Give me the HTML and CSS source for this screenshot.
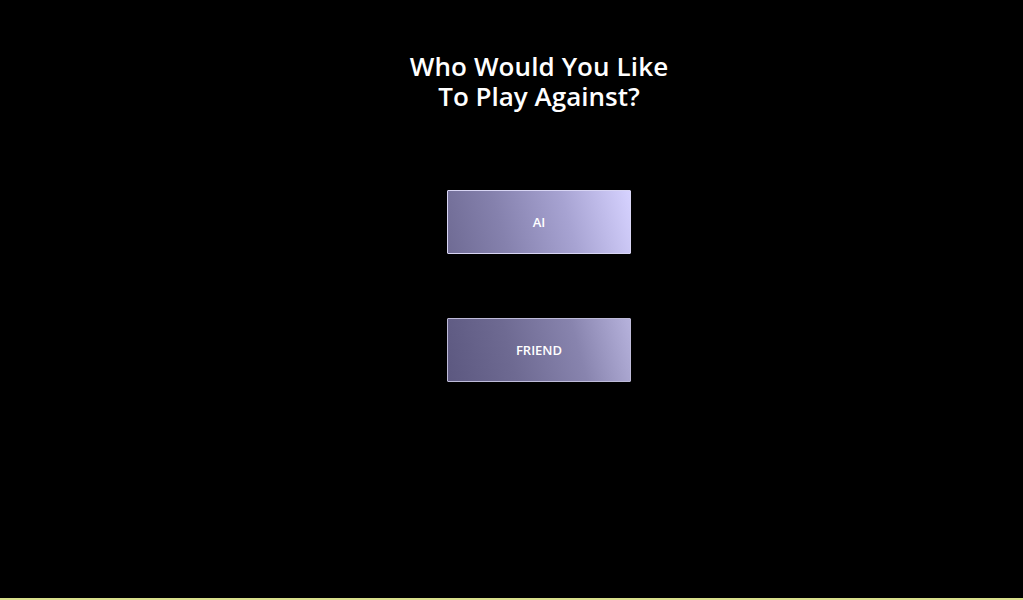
FILE: index.html
```html
<!DOCTYPE html>
<html>
<head>
<meta charset="utf-8">
<link rel="stylesheet" href="styles.css">
</head>
<body>
<main class="screen">
  <h1 class="title"><span class="line">Who Would You Like</span><span class="line">To Play Against?</span></h1>
  <div class="choices">
    <button class="btn btn-ai">AI</button>
    <button class="btn btn-friend">FRIEND</button>
  </div>
</main>
<div class="bottom-line"></div>
</body>
</html>
```
FILE: styles.css
```css
html, body {
  margin: 0;
  padding: 0;
  background: #000;
}
body {
  width: 1023px;
  height: 600px;
  display: flex;
  flex-direction: column;
  overflow: hidden;
}
.screen {
  flex: 1;
  display: flex;
  flex-direction: column;
  align-items: center;
  padding-left: 55px;
  box-sizing: border-box;
  width: 1023px;
}
.title {
  margin: 51px 0 0 0;
  font-family: "Open Sans", "DejaVu Sans", sans-serif;
  font-weight: 600;
  font-size: 26px;
  line-height: 30px;
  color: #fff;
  text-align: center;
  display: flex;
  flex-direction: column;
  align-items: center;
}
.line {
  display: block;
  white-space: nowrap;
}
.line:first-child {
  letter-spacing: 0.1px;
}
.line:last-child {
  letter-spacing: 0px;
}
.choices {
  margin-top: 79px;
  display: flex;
  flex-direction: column;
  gap: 64px;
}
.btn {
  width: 184px;
  height: 64px;
  border: 1px solid #c9c6e6;
  border-radius: 1px;
  color: #fff;
  font-family: "Open Sans", "DejaVu Sans", sans-serif;
  font-weight: 600;
  font-size: 13px;
  padding: 0;
  margin: 0;
  box-sizing: border-box;
}
.btn-ai {
  background: linear-gradient(75deg, #6f6b94 0%, #8581ad 30%, #a7a3d2 65%, #d6d2ff 100%);
  border-color: #d8d5f4;
}
.btn-friend {
  background: linear-gradient(75deg, #5c5880 0%, #6e6a92 35%, #8884ae 70%, #b6b2dc 100%);
  border-color: #bebbd9;
}
.bottom-line {
  height: 2px;
  background: #d9df8c;
}
```
